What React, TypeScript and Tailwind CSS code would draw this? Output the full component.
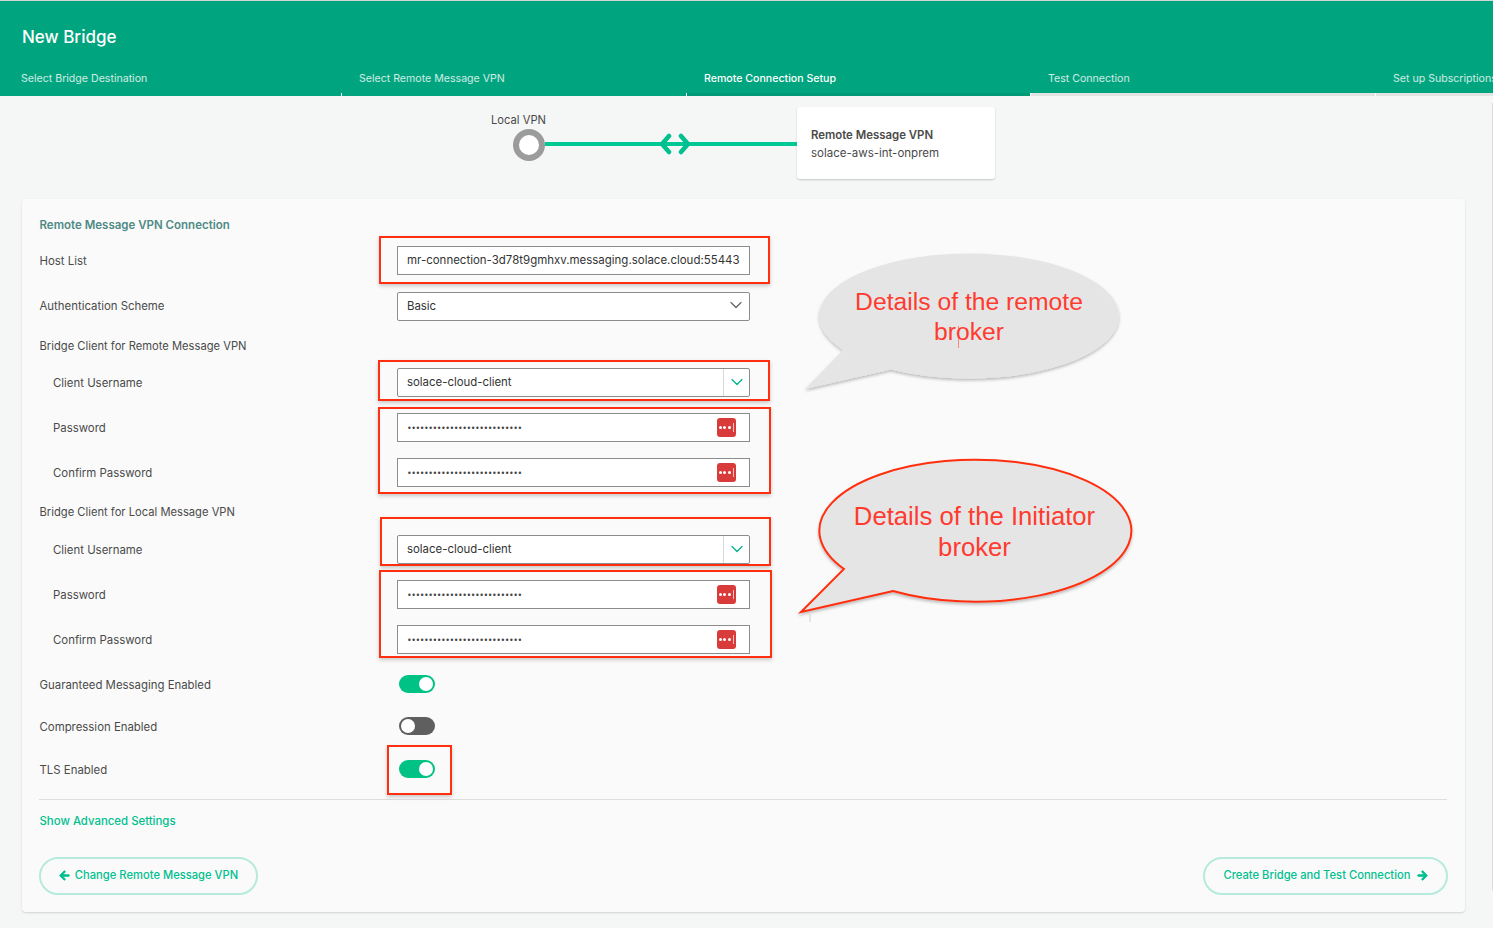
import { ChevronDown } from "lucide-react";
import { FaArrowLeft, FaArrowRight } from "react-icons/fa";

const font = "font-['Inter','Noto_Sans',sans-serif]";

const steps = [
  { label: "Select Bridge Destination", width: "w-[342px]", pad: "pl-[21px]", text: "text-white/80", bar: "border-[#00a47e]" },
  { label: "Select Remote Message VPN", width: "w-[345px]", pad: "pl-[17px]", text: "text-white/80", bar: "border-[#00a47e]" },
  { label: "Remote Connection Setup", width: "w-[344px]", pad: "pl-[17px]", text: "text-white font-medium", bar: "border-[#009a76]" },
  { label: "Test Connection", width: "w-[345px]", pad: "pl-[17px]", text: "text-white/80", bar: "border-[#e2e4e3]" },
  { label: "Set up Subscriptions", width: "w-[344px]", pad: "pl-[17px]", text: "text-white/80", bar: "border-[#e2e4e3]" },
];

const Row = ({ label, indent, flat, className, children }: { label: string; indent?: boolean; flat?: boolean; className?: string; children?: React.ReactNode }) => (
  <div className={`flex items-center h-[29px] ${className ?? ""}`}>
    <div className={`w-[358px] text-[11.4px] text-[#4a4a4a] ${flat ? "" : "pt-[2px]"} ${indent ? "pl-[14px]" : "pl-[0.5px]"}`}>{label}</div>
    {children}
  </div>
);

const TextBox = ({ children }: { children: React.ReactNode }) => (
  <div className="w-[353px] h-[29px] flex items-center justify-between bg-white border border-[#8c8c8c] pl-[9px] text-[11.47px] text-[#333]">
    {children}
  </div>
);

const PasswordBox = () => (
  <TextBox>
    <span className="pt-[2px] text-[8px] tracking-[-0.47px] text-[#444] font-['DejaVu_Sans',sans-serif]">{"•".repeat(27)}</span>
    <span className="mr-[13px] w-[19px] h-[19px] rounded-[3px] bg-[#d93b3b] flex items-center justify-center gap-[1.5px]">
      <i className="w-[3px] h-[3px] rounded-full bg-white" />
      <i className="w-[3px] h-[3px] rounded-full bg-white" />
      <i className="w-[3px] h-[3px] rounded-full bg-white" />
      <i className="w-px h-[9px] ml-px bg-white/70" />
    </span>
  </TextBox>
);

const ClientSelect = () => (
  <div className="w-[353px] h-[29px] flex items-center bg-white border border-[#8c8c8c] rounded-[2px] pl-[9px] text-[11.4px] text-[#333]">
    <span className="flex-1">solace-cloud-client</span>
    <span className="w-[26px] h-[27px] border-l border-[#d8d8d8] flex items-center justify-center pl-[1px] pb-px">
      <ChevronDown className="w-[20px] h-[20px] text-[#00b48a]" strokeWidth={1.5} />
    </span>
  </div>
);

const Toggle = ({ on }: { on?: boolean }) => (
  <div className={`ml-[2px] mb-[2px] w-[36px] h-[18px] rounded-full flex items-center px-[2px] ${on ? "bg-[#00c285] justify-end" : "bg-[#5f5f5f] justify-start"}`}>
    <span className="w-[14px] h-[14px] rounded-full bg-white" />
  </div>
);

const boxes = [
  "left-[379px] top-[236px] w-[391px] h-[48px]",
  "left-[378px] top-[360px] w-[392px] h-[41px]",
  "left-[378px] top-[407px] w-[393px] h-[87px]",
  "left-[380px] top-[517px] w-[391px] h-[49px]",
  "left-[379px] top-[570px] w-[393px] h-[88px]",
  "left-[387px] top-[745px] w-[65px] h-[50px]",
];

const Callouts = () => (
  <svg className="absolute left-0 top-0 pointer-events-none" width="1493" height="928" viewBox="0 0 1493 928">
    <defs>
      <filter id="soft" x="-10%" y="-10%" width="120%" height="125%">
        <feDropShadow dx="0" dy="2" stdDeviation="1.5" floodColor="#000" floodOpacity="0.25" />
      </filter>
    </defs>
    <path d="M843 349.9 A150 62.5 0 1 1 891 369.4 L805 389 Z" fill="#e5e5e5" filter="url(#soft)" />
    <path d="M844 569 A156 71 0 1 1 893 591 L801 612 Z" fill="#e5e5e5" stroke="#ff2f0f" strokeWidth="2" filter="url(#soft)" />
    <path d="M958.5 326 V348" stroke="#ff6a55" strokeWidth="0.75" />
    <path d="M810 614 V622" stroke="#c4c4c4" strokeWidth="0.75" />
  </svg>
);

export default function App() {
  return (
    <div className={`relative w-[1493px] h-[928px] overflow-hidden bg-[#f5f7f7] ${font}`}>
      <header className="h-[96px] bg-[#00a47e] border-t border-[#d5d5d5] flex flex-col">
        <h1 className="pl-[22px] pt-[24px] h-[66px] text-[17px] leading-[24px] font-medium text-white">New Bridge</h1>
        <div className="flex flex-1">
          {steps.map((step, i) => (
            <div key={step.label} className={`${step.width} ${step.pad} shrink-0 border-b-[3px] ${step.bar} relative pt-px text-[10.6px] leading-[22px] whitespace-nowrap ${step.text}`}>
              {step.label}
              {i < 4 && <span className="absolute right-0 -bottom-[3px] w-px h-[3px] bg-white" />}
            </div>
          ))}
        </div>
      </header>

      <section className="h-[103px] flex pt-[11px] pl-[491px]">
        <div className="w-[54px] flex flex-col items-end">
          <div className="w-full pt-[6px] text-[11.2px] leading-[14px] whitespace-nowrap text-[#4a4a4a]">Local VPN</div>
          <div className="mt-[2px] w-[32px] h-[32px] rounded-full border-[6px] border-[#9b9b9b] bg-white" />
        </div>
        <div className="relative mt-[35px] w-[252px] h-[4px] bg-[#00c895]">
          <svg className="absolute left-[114px] -top-[9px]" width="32" height="22" viewBox="0 0 32 22" fill="none" stroke="#00c08f" strokeWidth="4.5" strokeLinecap="round" strokeLinejoin="round">
            <path d="M10 3 3 11l7 8" />
            <path d="M22 3l7 8-7 8" />
          </svg>
        </div>
        <div className="w-[198px] h-[72px] bg-white rounded-[3px] shadow-[0_1px_2px_rgba(0,0,0,0.2)] pl-[14px] pt-[20px]">
          <div className="text-[11.4px] leading-[16px] font-semibold text-[#4a4a4a]">Remote Message VPN</div>
          <div className="mt-[2px] text-[11.5px] leading-[16px] text-[#4a4a4a]">solace-aws-int-onprem</div>
        </div>
      </section>

      <main className="mx-[22px] w-[1443px] h-[713px] bg-[#fafafa] rounded-[4px] shadow-[0_1px_2px_rgba(0,0,0,0.15)] pl-[17px] pr-[18px] pt-[18px]">
        <h2 className="h-[16px] pl-[0.5px] text-[11.5px] leading-[16px] font-semibold text-[#4f8a85]">Remote Message VPN Connection</h2>
        <Row label="Host List" className="mt-[13px]">
          <TextBox>mr-connection-3d78t9gmhxv.messaging.solace.cloud:55443</TextBox>
        </Row>
        <Row label="Authentication Scheme" flat className="mt-[17px]">
          <div className="w-[353px] h-[29px] flex items-center justify-between bg-white border border-[#8c8c8c] rounded-[2px] pl-[9px] pr-[3px] text-[11.4px] text-[#333]">
            Basic
            <ChevronDown className="w-[20px] h-[20px] mb-[3px] text-[#666]" strokeWidth={1.5} />
          </div>
        </Row>
        <div className="mt-[15px] pl-[0.5px] text-[11.2px] leading-[20px] text-[#4a4a4a]">Bridge Client for Remote Message VPN</div>
        <Row label="Client Username" indent className="mt-[12px]"><ClientSelect /></Row>
        <Row label="Password" indent className="mt-[16px]"><PasswordBox /></Row>
        <Row label="Confirm Password" indent className="mt-[16px]"><PasswordBox /></Row>
        <div className="mt-[15px] pl-[0.5px] text-[11.2px] leading-[20px] text-[#4a4a4a]">Bridge Client for Local Message VPN</div>
        <Row label="Client Username" indent className="mt-[13px]"><ClientSelect /></Row>
        <Row label="Password" indent className="mt-[16px]"><PasswordBox /></Row>
        <Row label="Confirm Password" indent className="mt-[16px]"><PasswordBox /></Row>
        <Row label="Guaranteed Messaging Enabled" className="mt-[16px]"><Toggle on /></Row>
        <Row label="Compression Enabled" className="mt-[13px]"><Toggle /></Row>
        <Row label="TLS Enabled" className="mt-[14px]"><Toggle on /></Row>
        <div className="mt-[15px] border-t border-[#dedede] pt-[13px] pl-[0.5px] text-[11.4px] leading-[16px] font-medium text-[#00c08f]">Show Advanced Settings</div>
        <div className="mt-[28px] flex justify-between">
          <button className="h-[38px] w-[219px] pb-[2px] rounded-full border-2 border-[#b5ebdc] flex items-center justify-center gap-[5px] text-[11.2px] font-medium text-[#00c08f]">
            <FaArrowLeft className="w-[11px] h-[11px]" stroke="currentColor" strokeWidth={40} />
            Change Remote Message VPN
          </button>
          <button className="h-[38px] w-[245px] -mr-[1px] pb-[2px] rounded-full border-2 border-[#b5ebdc] flex items-center justify-center gap-[6px] text-[11.2px] font-medium text-[#00c08f]">
            Create Bridge and Test Connection
            <FaArrowRight className="w-[11px] h-[11px]" stroke="currentColor" strokeWidth={40} />
          </button>
        </div>
      </main>

      <div className="absolute right-0 top-[103px] w-px h-[787px] bg-[#dcdcdc]" />

      {boxes.map((box) => (
        <div key={box} className={`absolute ${box} border-2 border-[#ff2f0f] shadow-[0_2px_4px_rgba(0,0,0,0.2)] pointer-events-none`} />
      ))}

      <Callouts />
      <div className="absolute left-[819px] top-[287px] w-[300px] text-center font-['Liberation_Sans',sans-serif] text-[24.7px] leading-[30px] text-[#ff3b30]">
        Details of the remote
        <br />
        broker
      </div>
      <div className="absolute left-[818px] top-[501px] w-[313px] text-center font-['Liberation_Sans',sans-serif] text-[25.7px] leading-[31px] text-[#ff3b30]">
        Details of the Initiator
        <br />
        broker
      </div>
    </div>
  );
}
